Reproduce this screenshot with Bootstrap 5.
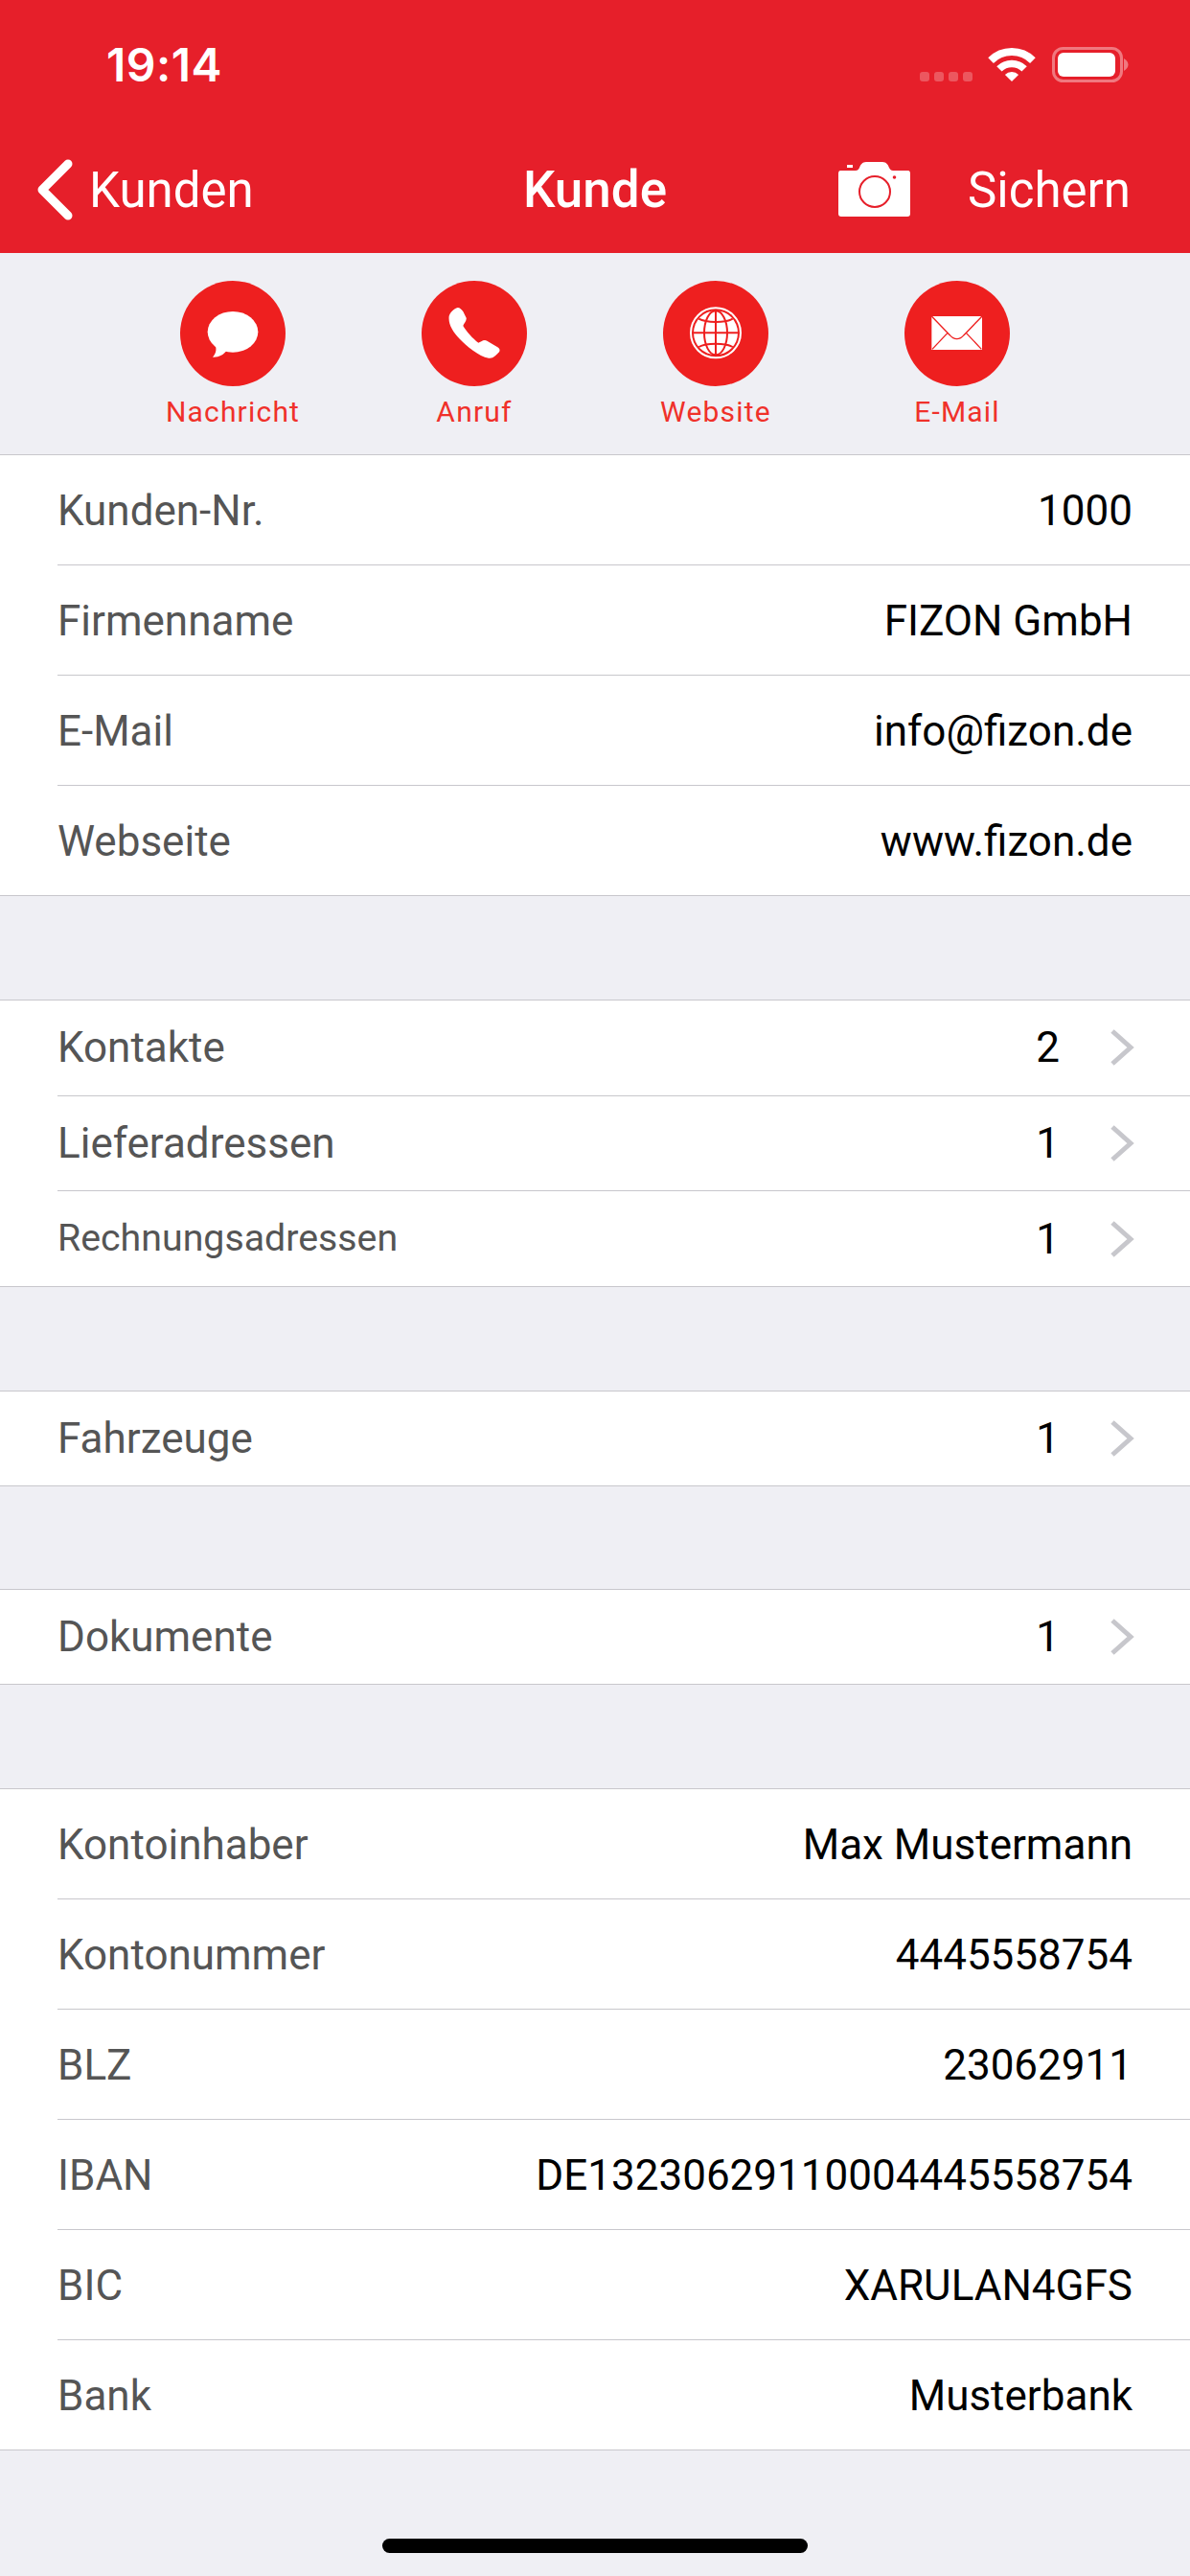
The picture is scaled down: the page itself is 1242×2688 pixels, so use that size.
<!DOCTYPE html>
<html lang="de">
<head>
<meta charset="utf-8">
<title>Kunde</title>
<link rel="stylesheet" href="https://cdn.jsdelivr.net/npm/bootstrap@5.3.0/dist/css/bootstrap.min.css">
<style>
html,body{margin:0;background:#efeff4;}
body{font-family:"Roboto","Liberation Sans",sans-serif;width:1242px;height:2688px;overflow:hidden;}
.app-head{background:#e61f2a;color:#fff;height:264px;}
.status-row{height:132px;padding:4px 0 0 111px;}
.status-time{font-family:"Inter","Liberation Sans",sans-serif;font-size:48px;font-weight:600;line-height:1;letter-spacing:.5px;}
.status-icons{position:absolute;left:950px;top:40px;}
.nav-row{height:132px;padding:0 62px;display:grid;grid-template-columns:minmax(0,1fr) auto minmax(0,1fr);}
.back-link{margin-left:-24px;}
.nav-text{font-size:51px;line-height:1;margin-left:15px;}
.nav-title{font-size:53px;font-weight:500;line-height:1;}
.save-text{font-size:51px;line-height:1;margin-left:59px;}
.action-strip{height:211px;padding-top:29px;border-bottom:1px solid #c8c7cc;}
.action-item{width:252px;}
.action-disc{width:110px;height:110px;background:#ee1f1f;}
.action-label{font-size:30px;line-height:1;color:#f0312a;margin-top:12px;letter-spacing:1.2px;}
.sheet{background:#fff;border-radius:0;--bs-list-group-border-radius:0;}
.sheet.gap-before{margin-top:108px;border-top:1px solid #c8c7cc;}
.sheet.gap-narrow{margin-top:107px;}
.sheet-row{border:0;padding:0 60px 0 0;margin-left:60px;border-bottom:1px solid #c8c7cc;background:transparent;box-sizing:border-box;}
.sheet .sheet-row:first-child,.sheet .sheet-row:last-child{border-radius:0;}
.sheet .sheet-row:last-child{margin-left:0;padding-left:60px;border-bottom-width:1px;}
.tall{height:115px;padding-top:2px;}
.short{height:99.67px;}
.solo{height:99px;padding-top:1px;}
.field-name{font-size:44px;color:#555;line-height:1;}
.field-name.tight{font-size:39.3px;}
.field-value{font-size:44px;color:#000;line-height:1;}
.chev{margin-left:52px;margin-right:-2px;}
.home-bar{width:444px;height:15px;background:#000;margin-top:92px;}
</style>
</head>
<body>
<header class="app-head">
  <div class="status-row d-flex align-items-center"><span class="status-time">19:14</span></div>
  <svg class="status-icons" width="240" height="56" viewBox="950 40 240 56" aria-hidden="true">
    <g fill="#fff" fill-opacity=".25">
      <rect x="960" y="75" width="10" height="10" rx="3"/><rect x="975" y="75" width="10" height="10" rx="3"/><rect x="990" y="75" width="10" height="10" rx="3"/><rect x="1005" y="75" width="10" height="10" rx="3"/>
    </g>
    <g fill="none" stroke="#fff">
      <path d="M1034.100 63.100 A31 31 0 0 1 1077.900 63.100" stroke-width="8"/>
      <path d="M1042.900 71.900 A18.500 18.500 0 0 1 1069.100 71.900" stroke-width="7.500"/>
    </g>
    <path d="M1056 85 L1048.900 77.900 A10 10 0 0 1 1063.100 77.900 Z" fill="#fff"/>
    <rect x="1099.500" y="50.500" width="71" height="34" rx="10" fill="none" stroke="#fff" stroke-opacity=".4" stroke-width="3"/>
    <rect x="1104" y="55" width="60" height="25" rx="6" fill="#fff"/>
    <path d="M1173 61 C1176 63 1177.500 65 1177.500 67.500 C1177.500 70 1176 72 1173 74 Z" fill="#fff" fill-opacity=".4"/>
  </svg>
  <nav class="nav-row align-items-center">
    <div class="back-link d-flex align-items-center">
      <svg width="40" height="64" viewBox="0 0 40 64" aria-hidden="true"><path d="M33 5 L6 32 L33 59" fill="none" stroke="#fff" stroke-width="9" stroke-linecap="round" stroke-linejoin="round"/></svg>
      <span class="nav-text">Kunden</span>
    </div>
    <div class="nav-title">Kunde</div>
    <div class="d-flex align-items-center justify-content-end">
      <svg width="76" height="58" viewBox="875 169 76 58" aria-hidden="true">
        <path d="M884 172h6v3h-6z" fill="#fff"/>
        <path d="M877 178 H893 C895 178 896 177 897 175 C898 172 900 169 904 169 H921 C925 169 927 172 928 175 C929 177 930 178 932 178 H948 C949 178 950 179 950 181 V223 C950 225 949 226 947 226 H878 C876 226 875 225 875 223 V181 C875 179 876 178 877 178 Z" fill="#fff"/>
        <circle cx="913" cy="200" r="16" fill="#fff" stroke="#e61f2a" stroke-width="2"/>
        <circle cx="933.500" cy="185" r="1.800" fill="#e61f2a"/>
      </svg>
      <span class="save-text">Sichern</span>
    </div>
  </nav>
</header>

<section class="action-strip d-flex justify-content-center">
  <div class="action-item d-flex flex-column align-items-center">
    <div class="action-disc rounded-circle">
      <svg width="110" height="110" viewBox="24 24 330 330" aria-hidden="true">
        <ellipse cx="189" cy="184" rx="79" ry="64" fill="#fff"/>
        <path d="M134 225 C139 240 136 252 126 263 C145 264 160 256 172 240 Z" fill="#fff"/>
      </svg>
    </div>
    <div class="action-label">Nachricht</div>
  </div>
  <div class="action-item d-flex flex-column align-items-center">
    <div class="action-disc rounded-circle">
      <svg width="110" height="110" viewBox="30 24 330 330" aria-hidden="true">
        <path d="M143 108 C150 108 155 114 160 120 L170 140 C172 148 162 158 160 165 C170 182 190 205 208 218 C215 216 225 205 235 212 L268 232 C277 238 276 244 270 250 C262 258 255 268 240 266 C210 262 170 228 148 205 C128 182 113 160 116 135 C118 125 132 110 143 108 Z" fill="#fff"/>
      </svg>
    </div>
    <div class="action-label">Anruf</div>
  </div>
  <div class="action-item d-flex flex-column align-items-center">
    <div class="action-disc rounded-circle">
      <svg width="110" height="110" viewBox="30 24 330 330" aria-hidden="true">
        <circle cx="195" cy="187" r="78" fill="none" stroke="#fff" stroke-width="6"/>
        <circle cx="195" cy="187" r="69" fill="#fff"/>
        <g fill="none" stroke="#ee1f1f" stroke-width="6">
          <path d="M195 118 V256"/>
          <path d="M126 187 H264"/>
          <ellipse cx="195" cy="187" rx="36" ry="69"/>
          <path d="M142 143 C165 156 225 156 248 143"/>
          <path d="M142 231 C165 218 225 218 248 231"/>
        </g>
      </svg>
    </div>
    <div class="action-label">Website</div>
  </div>
  <div class="action-item d-flex flex-column align-items-center">
    <div class="action-disc rounded-circle">
      <svg width="110" height="110" viewBox="30 24 330 330" aria-hidden="true">
        <rect x="115" y="135" width="158" height="105" fill="#fff"/>
        <g fill="none" stroke="#ee1f1f" stroke-width="4">
          <path d="M115 135 L172 194 C185 210 203 210 216 194 L273 135"/>
          <path d="M117 238 L165 187"/>
          <path d="M271 238 L223 187"/>
        </g>
      </svg>
    </div>
    <div class="action-label">E-Mail</div>
  </div>
</section>

<main>
  <div class="list-group sheet">
    <div class="list-group-item sheet-row tall d-flex justify-content-between align-items-center"><span class="field-name">Kunden-Nr.</span><span class="field-value">1000</span></div>
    <div class="list-group-item sheet-row tall d-flex justify-content-between align-items-center"><span class="field-name">Firmenname</span><span class="field-value">FIZON GmbH</span></div>
    <div class="list-group-item sheet-row tall d-flex justify-content-between align-items-center"><span class="field-name">E-Mail</span><span class="field-value">info@fizon.de</span></div>
    <div class="list-group-item sheet-row tall d-flex justify-content-between align-items-center"><span class="field-name">Webseite</span><span class="field-value">www.fizon.de</span></div>
  </div>

  <div class="list-group sheet gap-before">
    <div class="list-group-item sheet-row short d-flex align-items-center"><span class="field-name me-auto">Kontakte</span><span class="field-value">2</span><svg class="chev" width="26" height="40" viewBox="0 0 26 40" aria-hidden="true"><path d="M3 3 L22 20 L3 37" fill="none" stroke="#c7c7cc" stroke-width="5"/></svg></div>
    <div class="list-group-item sheet-row short d-flex align-items-center"><span class="field-name me-auto">Lieferadressen</span><span class="field-value">1</span><svg class="chev" width="26" height="40" viewBox="0 0 26 40" aria-hidden="true"><path d="M3 3 L22 20 L3 37" fill="none" stroke="#c7c7cc" stroke-width="5"/></svg></div>
    <div class="list-group-item sheet-row short d-flex align-items-center"><span class="field-name tight me-auto">Rechnungsadressen</span><span class="field-value">1</span><svg class="chev" width="26" height="40" viewBox="0 0 26 40" aria-hidden="true"><path d="M3 3 L22 20 L3 37" fill="none" stroke="#c7c7cc" stroke-width="5"/></svg></div>
  </div>

  <div class="list-group sheet gap-before">
    <div class="list-group-item sheet-row solo d-flex align-items-center"><span class="field-name me-auto">Fahrzeuge</span><span class="field-value">1</span><svg class="chev" width="26" height="40" viewBox="0 0 26 40" aria-hidden="true"><path d="M3 3 L22 20 L3 37" fill="none" stroke="#c7c7cc" stroke-width="5"/></svg></div>
  </div>

  <div class="list-group sheet gap-before gap-narrow">
    <div class="list-group-item sheet-row solo d-flex align-items-center"><span class="field-name me-auto">Dokumente</span><span class="field-value">1</span><svg class="chev" width="26" height="40" viewBox="0 0 26 40" aria-hidden="true"><path d="M3 3 L22 20 L3 37" fill="none" stroke="#c7c7cc" stroke-width="5"/></svg></div>
  </div>

  <div class="list-group sheet gap-before">
    <div class="list-group-item sheet-row tall d-flex justify-content-between align-items-center"><span class="field-name">Kontoinhaber</span><span class="field-value">Max Mustermann</span></div>
    <div class="list-group-item sheet-row tall d-flex justify-content-between align-items-center"><span class="field-name">Kontonummer</span><span class="field-value">4445558754</span></div>
    <div class="list-group-item sheet-row tall d-flex justify-content-between align-items-center"><span class="field-name">BLZ</span><span class="field-value">23062911</span></div>
    <div class="list-group-item sheet-row tall d-flex justify-content-between align-items-center"><span class="field-name">IBAN</span><span class="field-value">DE13230629110004445558754</span></div>
    <div class="list-group-item sheet-row tall d-flex justify-content-between align-items-center"><span class="field-name">BIC</span><span class="field-value">XARULAN4GFS</span></div>
    <div class="list-group-item sheet-row tall d-flex justify-content-between align-items-center"><span class="field-name">Bank</span><span class="field-value">Musterbank</span></div>
  </div>
  <div class="d-flex justify-content-center"><div class="home-bar rounded-pill"></div></div>
</main>
</body>
</html>
